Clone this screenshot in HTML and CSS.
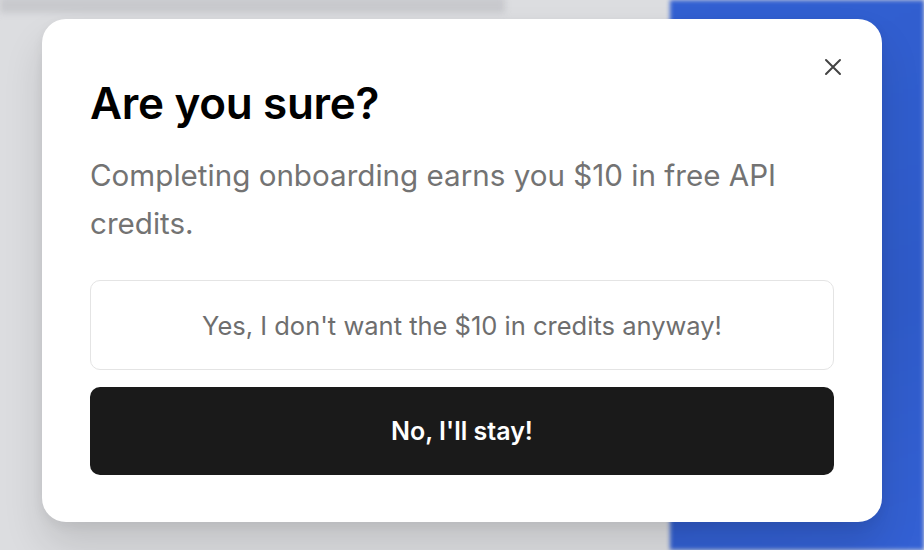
FILE: index.html
```html
<!DOCTYPE html>
<html lang="en">
<head>
<meta charset="utf-8">
<title>Are you sure?</title>
<link rel="stylesheet" href="styles.css">
</head>
<body>
<div class="backdrop">
  <div class="page-left">
    <div class="topbar"></div>
  </div>
  <div class="page-right"></div>
</div>
<div class="modal" role="dialog" aria-labelledby="title">
  <button class="close" aria-label="Close">
    <svg viewBox="0 0 24 24" width="24" height="24" fill="none" stroke="#444" stroke-width="2" stroke-linecap="round"><path d="M5 5L19 19M19 5L5 19"/></svg>
  </button>
  <h1 class="title" id="title">Are you sure?</h1>
  <p class="desc">Completing onboarding earns you $10 in free API credits.</p>
  <div class="actions">
    <button class="btn btn-outline">Yes, I don't want the $10 in credits anyway!</button>
    <button class="btn btn-solid">No, I'll stay!</button>
  </div>
</div>
</body>
</html>
```

FILE: styles.css
```css
html, body {
  margin: 0;
  padding: 0;
  width: 924px;
  height: 550px;
  overflow: hidden;
  font-family: "Inter", "Liberation Sans", sans-serif;
}

.backdrop {
  position: absolute;
  inset: 0;
  display: flex;
  background: #dcdde0;
}

.page-left {
  width: 670px;
  flex: none;
}

.topbar {
  width: 505px;
  height: 16px;
  background: #c8c9cd;
  filter: blur(3px);
  margin-top: -3px;
}

.page-right {
  flex: 1;
  background: linear-gradient(160deg, #3260d2 0%, #2f5bc9 60%, #3461d4 100%);
  filter: blur(2px);
}

.modal {
  position: absolute;
  left: 42px;
  top: 19px;
  width: 840px;
  box-sizing: border-box;
  padding: 58px 48px 47px;
  background: #ffffff;
  border-radius: 24px;
  box-shadow: 0 24px 40px rgba(0, 0, 0, 0.12), 0 4px 12px rgba(0, 0, 0, 0.06);
}

.close {
  position: absolute;
  top: 36px;
  right: 37px;
  width: 24px;
  height: 24px;
  padding: 0;
  border: 0;
  background: none;
  display: flex;
}

.title {
  margin: 0;
  font-size: 44px;
  line-height: 52px;
  font-weight: 600;
  color: #000;
  letter-spacing: -0.3px;
}

.desc {
  margin: 22px 0 0;
  font-size: 29.6px;
  line-height: 48px;
  color: #737373;
  max-width: 720px;
}

.actions {
  margin-top: 33px;
  display: flex;
  flex-direction: column;
  gap: 17px;
}

.btn {
  font-family: inherit;
  width: 100%;
  border-radius: 10px;
  display: flex;
  align-items: center;
  justify-content: center;
  cursor: pointer;
}

.btn-outline {
  height: 90px;
  background: #fff;
  border: 1.5px solid #e4e4e4;
  color: #6e6e6e;
  font-size: 25.5px;
  font-weight: 400;
}

.btn-solid {
  height: 88px;
  background: #1a1a1a;
  border: 0;
  color: #fff;
  font-size: 25px;
  font-weight: 600;
}
```
